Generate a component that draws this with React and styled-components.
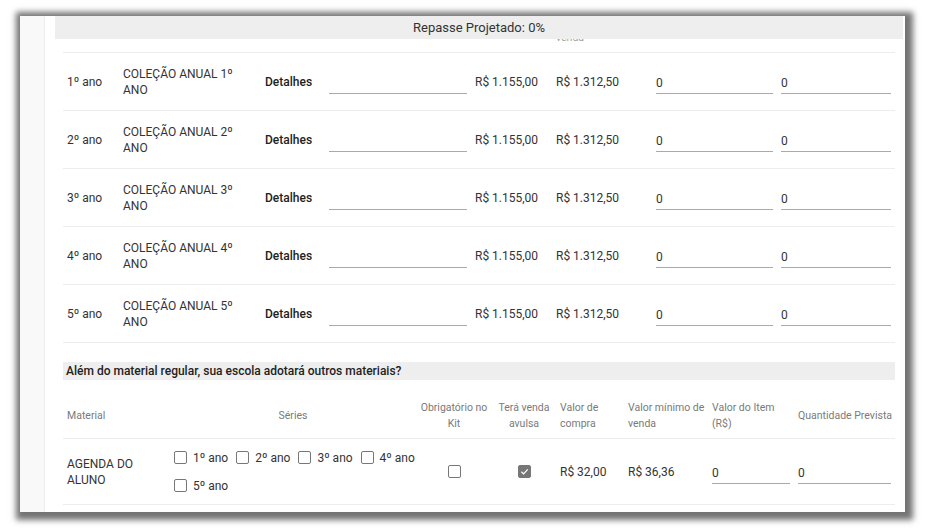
import React from 'react'
import styled, { createGlobalStyle } from 'styled-components'

const GlobalStyle = createGlobalStyle`
  html, body {
    margin: 0;
    padding: 0;
    background: #ffffff;
    font-family: Roboto, "Liberation Sans", Arial, sans-serif;
    color: #2b2b2b;
  }
`

const KIT_COLS = '56px 142px 64px 146px 81px 100px 125px 118px'
const EXTRA_COLS = '107px 246px 76px 64px 68px 84px 86px 101px'

const series = ['1º', '2º', '3º', '4º', '5º']

const Checkbox = ({ checked }) => (
  <S.Box checked={checked}>
    {checked && (
      <svg width="9" height="9" viewBox="0 0 10 10">
        <path d="M1.5 5.2 L4 7.6 L8.6 2.6" fill="none" stroke="#fff" strokeWidth="1.4" />
      </svg>
    )}
  </S.Box>
)

const App = () => {
  return (
    <S.Page>
      <GlobalStyle />
      <S.Frame>
        <S.Rail />
        <S.Content>
          <S.Banner>Repasse Projetado: 0%</S.Banner>

          <S.Table>
            <S.Peek cols={KIT_COLS}>
              <span />
              <span />
              <span />
              <span />
              <span />
              <S.PeekText>venda</S.PeekText>
            </S.Peek>
            <S.Body>
              {series.map((s) => (
                <S.Row key={s} cols={KIT_COLS}>
                  <S.Cell>{s} ano</S.Cell>
                  <S.Cell>
                    <S.Wrap>COLEÇÃO ANUAL {s} ANO</S.Wrap>
                  </S.Cell>
                  <S.Cell bold>Detalhes</S.Cell>
                  <S.Cell>
                    <S.Input defaultValue="" />
                  </S.Cell>
                  <S.Cell>R$ 1.155,00</S.Cell>
                  <S.Cell>R$ 1.312,50</S.Cell>
                  <S.Cell>
                    <S.Input defaultValue="0" />
                  </S.Cell>
                  <S.Cell>
                    <S.Input defaultValue="0" />
                  </S.Cell>
                </S.Row>
              ))}
            </S.Body>

            <S.SectionTitle>Além do material regular, sua escola adotará outros materiais?</S.SectionTitle>

            <S.HeadRow cols={EXTRA_COLS}>
              <S.Head>Material</S.Head>
              <S.Head center>Séries</S.Head>
              <S.Head center>Obrigatório no<br />Kit</S.Head>
              <S.Head center>Terá venda<br />avulsa</S.Head>
              <S.Head>Valor de<br />compra</S.Head>
              <S.Head>Valor mínimo de<br />venda</S.Head>
              <S.Head>Valor do Item<br />(R$)</S.Head>
              <S.Head>Quantidade Prevista</S.Head>
            </S.HeadRow>

            <S.DataRow cols={EXTRA_COLS}>
              <S.Cell>AGENDA DO<br />ALUNO</S.Cell>
              <S.Cell>
                <S.Series>
                  {series.map((s) => (
                    <S.Option key={s}>
                      <Checkbox />
                      <span>{s} ano</span>
                    </S.Option>
                  ))}
                </S.Series>
              </S.Cell>
              <S.Cell center>
                <Checkbox />
              </S.Cell>
              <S.Cell center>
                <Checkbox checked />
              </S.Cell>
              <S.Cell>R$ 32,00</S.Cell>
              <S.Cell>R$ 36,36</S.Cell>
              <S.Cell>
                <S.Input defaultValue="0" />
              </S.Cell>
              <S.Cell>
                <S.Input defaultValue="0" />
              </S.Cell>
            </S.DataRow>
          </S.Table>
        </S.Content>
      </S.Frame>
    </S.Page>
  )
}

const S = {
  Page: styled.div`
    min-height: 528px;
    padding: 16px 21px 16px 20px;
    box-sizing: border-box;
  `,
  Frame: styled.div`
    height: 496px;
    display: flex;
    background: #fff;
    overflow: hidden;
    box-shadow: 2px 2px 6px 6px rgba(0, 0, 0, 0.55);
  `,
  Rail: styled.div`
    width: 24px;
    flex-shrink: 0;
    background: #f9f9f9;
    border-right: 1px solid #ececec;
  `,
  Content: styled.div`
    flex: 1;
    padding: 0 2px 0 10px;
    display: flex;
    flex-direction: column;
    min-width: 0;
  `,
  Banner: styled.div`
    height: 23px;
    flex-shrink: 0;
    background: #eeeeee;
    display: flex;
    align-items: center;
    justify-content: center;
    font-size: 13px;
    color: #333;
  `,
  Table: styled.div`
    padding: 0 8px;
  `,
  Peek: styled.div`
    display: grid;
    grid-template-columns: ${(p) => p.cols};
    height: 13px;
    overflow: hidden;
  `,
  PeekText: styled.span`
    padding: 0 4px;
    margin-top: -7px;
    font-size: 10.5px;
    line-height: 11px;
    color: #a0a0a0;
  `,
  Body: styled.div`
    border-top: 1px solid #ededed;
  `,
  Row: styled.div`
    display: grid;
    grid-template-columns: ${(p) => p.cols};
    height: 58px;
    box-sizing: border-box;
    border-bottom: 1px solid #ededed;
  `,
  Cell: styled.div`
    display: flex;
    align-items: center;
    justify-content: ${(p) => (p.center ? 'center' : 'flex-start')};
    padding: 0 4px;
    font-size: 12px;
    line-height: 16px;
    font-weight: ${(p) => (p.bold ? 500 : 400)};
    color: ${(p) => (p.bold ? '#222' : '#333')};
    min-width: 0;
  `,
  Wrap: styled.span`
    max-width: 112px;
  `,
  Input: styled.input`
    width: 100%;
    height: 24px;
    margin-top: 1px;
    box-sizing: border-box;
    border: none;
    border-bottom: 1px solid #aaaaaa;
    background: transparent;
    padding: 2px 0 0;
    font-family: inherit;
    font-size: 12px;
    color: #333;
    outline: none;
  `,
  SectionTitle: styled.div`
    margin-top: 19px;
    height: 18px;
    background: #eeeeee;
    display: flex;
    align-items: center;
    padding-left: 3px;
    font-size: 12px;
    font-weight: 500;
    color: #222;
  `,
  HeadRow: styled.div`
    display: grid;
    grid-template-columns: ${(p) => p.cols};
    margin-top: 13px;
    height: 46px;
    box-sizing: border-box;
    border-bottom: 1px solid #ededed;
  `,
  Head: styled.div`
    display: flex;
    align-items: center;
    justify-content: ${(p) => (p.center ? 'center' : 'flex-start')};
    text-align: ${(p) => (p.center ? 'center' : 'left')};
    white-space: nowrap;
    padding: 0 4px;
    font-size: 10.5px;
    line-height: 16px;
    color: #7a7a7a;
  `,
  DataRow: styled.div`
    display: grid;
    grid-template-columns: ${(p) => p.cols};
    height: 66px;
    box-sizing: border-box;
    border-bottom: 1px solid #ededed;
  `,
  Series: styled.div`
    display: flex;
    flex-wrap: wrap;
    gap: 8px 8px;
    margin-right: -6px;
  `,
  Option: styled.label`
    display: flex;
    align-items: center;
    gap: 6px;
    height: 20px;
    font-size: 12px;
    color: #333;
  `,
  Box: styled.span`
    width: 13px;
    height: 13px;
    box-sizing: border-box;
    border-radius: 2px;
    border: 1.5px solid #777;
    background: ${(p) => (p.checked ? '#777' : '#fff')};
    display: inline-flex;
    align-items: center;
    justify-content: center;
    flex-shrink: 0;
  `,
}

export default App
